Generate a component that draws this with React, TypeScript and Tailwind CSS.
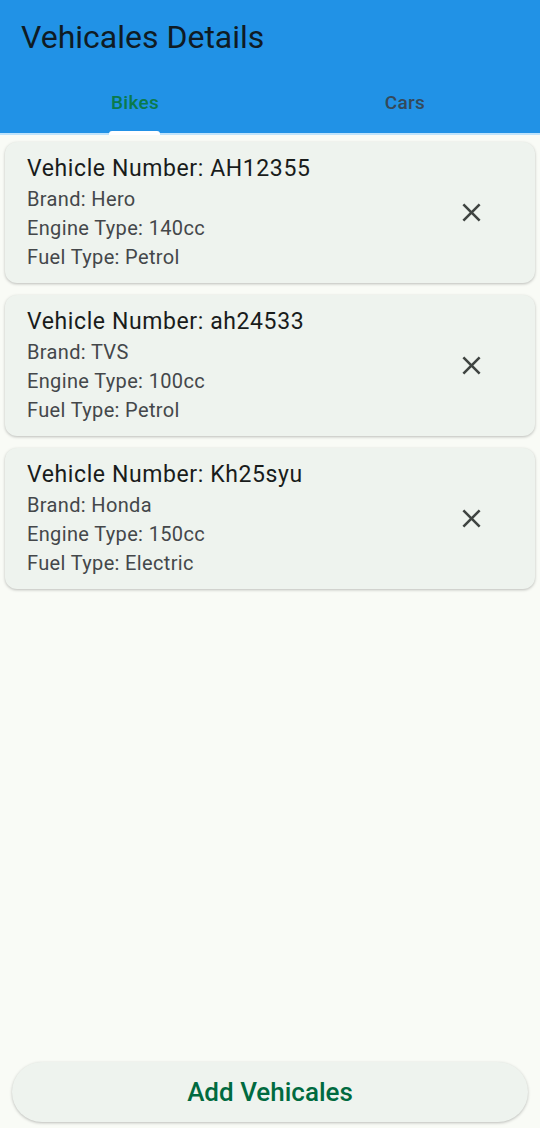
import React from "react";

type Vehicle = {
  number: string;
  brand: string;
  engine: string;
  fuel: string;
};

const bikes: Vehicle[] = [
  { number: "AH12355", brand: "Hero", engine: "140cc", fuel: "Petrol" },
  { number: "ah24533", brand: "TVS", engine: "100cc", fuel: "Petrol" },
  { number: "Kh25syu", brand: "Honda", engine: "150cc", fuel: "Electric" },
];

const CloseIcon = () => (
  <svg viewBox="0 0 24 24" className="h-[31px] w-[31px] fill-[#3f4441]">
    <path d="M19 6.41 17.59 5 12 10.59 6.41 5 5 6.41 10.59 12 5 17.59 6.41 19 12 13.41 17.59 19 19 17.59 13.41 12z" />
  </svg>
);

const VehicleCard: React.FC<{ v: Vehicle }> = ({ v }) => (
  <div className="flex items-center rounded-[12px] bg-[#eef3ee] pl-[22px] pr-[48px] pt-[11px] pb-[11px] shadow-[0_1px_3px_rgba(0,0,0,0.25)]">
    <div className="flex-1">
      <div className="text-[23px] leading-[32px] text-[#191c1b] tracking-[0.6px]">
        Vehicle Number: {v.number}
      </div>
      <div className="text-[20px] leading-[29px] text-[#44474a] tracking-[0.35px]">Brand: {v.brand}</div>
      <div className="text-[20px] leading-[29px] text-[#44474a] tracking-[0.35px]">Engine Type: {v.engine}</div>
      <div className="text-[20px] leading-[29px] text-[#44474a] tracking-[0.35px]">Fuel Type: {v.fuel}</div>
    </div>
    <CloseIcon />
  </div>
);

export default function App() {
  return (
    <div className="flex h-[1128px] flex-col bg-[#f9fbf6] font-['Roboto',sans-serif]">
      {/* Header with tabs */}
      <div className="bg-[#2192e6]">
        <div className="h-[74px] pl-[21px] pt-[15px] text-[32px] leading-[44px] text-[#0f1b24]">
          Vehicales Details
        </div>
        <div className="flex h-[59px]">
          <div className="relative flex flex-1 items-center justify-center pb-[1px]">
            <span className="text-[19px] font-medium tracking-[0.3px] text-[#0a7a4c]">Bikes</span>
            <div className="absolute bottom-[-2px] left-[109px] h-[4px] w-[51px] rounded-t-[3px] bg-white" />
          </div>
          <div className="flex flex-1 items-center justify-center pb-[1px]">
            <span className="text-[19px] font-medium tracking-[0.3px] text-[#34495a]">Cars</span>
          </div>
        </div>
      </div>
      <div className="h-[2px] bg-[#bfe3fb]" />

      {/* List */}
      <div className="flex flex-1 flex-col gap-[12px] px-[5px] pt-[7px]">
        {bikes.map((v) => (
          <VehicleCard key={v.number} v={v} />
        ))}
      </div>

      {/* Add button */}
      <div className="px-[12px] pb-[6px]">
        <button className="h-[60px] w-full rounded-full bg-[#eef3ee] text-[26px] font-medium text-[#006a40] shadow-[0_1px_3px_rgba(0,0,0,0.25)]">
          Add Vehicales
        </button>
      </div>
    </div>
  );
}
